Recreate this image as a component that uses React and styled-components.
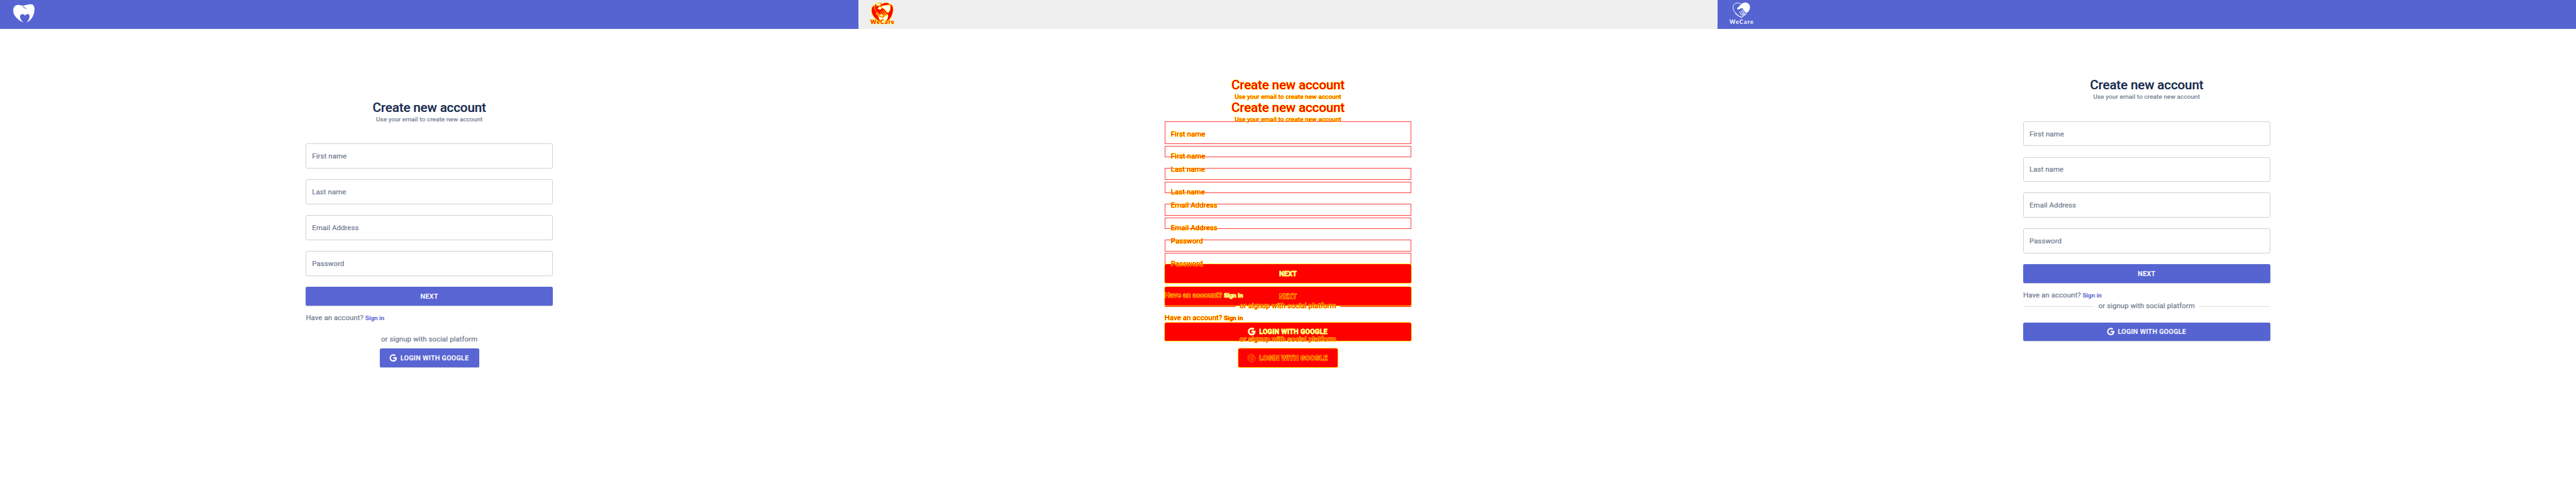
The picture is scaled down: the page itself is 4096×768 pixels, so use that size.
import React from "react";
import styled, { createGlobalStyle, css } from "styled-components";

const SCALE = 4096 / 5760;
const u = (n) => `${+(n * SCALE).toFixed(3)}px`;

const RED = "#ff0000";
const YELLOW = "#ffff00";

const GlobalStyle = createGlobalStyle`
  body { margin: 0; background: #fff; overflow: hidden; }
  * { box-sizing: border-box; }
`;

const Page = styled.main`
  display: grid;
  grid-template-columns: repeat(3, 1fr);
  width: 4096px;
  height: 768px;
  font-family: Roboto, "Liberation Sans", sans-serif;
  color: #6b778c;
`;

const Panel = styled.section`
  display: flex;
  flex-direction: column;
  background: #fff;
  overflow: hidden;
`;

const TopBar = styled.header`
  flex: none;
  height: ${u(64)};
  padding-left: ${u(24)};
  background: ${(p) => (p.$muted ? "#efefef" : "#5664d2")};
`;

const LogoSvg = styled.svg`
  display: block;
  width: ${u(60)};
  height: ${u(64)};
`;

const marked = css`
  position: relative;
  z-index: 1;
  color: ${(p) => (p.$hollow ? "#fff6dc" : RED)};
  -webkit-text-stroke: ${u(1.6)} ${YELLOW};
  paint-order: stroke fill;
`;

const Stack = styled.div`
  flex: 1;
  display: grid;
  justify-content: center;
  align-content: start;
  grid-template-columns: ${u(552)};
`;

const Form = styled.form`
  grid-area: 1 / 1;
  display: flex;
  flex-direction: column;
  padding-top: ${(p) => u(p.$top)};
  -webkit-text-stroke: 0.2px currentColor;
`;

const Title = styled.h2`
  margin: 0;
  text-align: center;
  font-size: ${u(29)};
  line-height: ${u(34)};
  font-weight: 500;
  letter-spacing: ${u(-0.2)};
  color: #172b4d;
  ${(p) => p.$diff && marked}
`;

const Subtitle = styled.p`
  margin: 0 0 ${u(44)};
  text-align: center;
  font-size: ${u(14)};
  line-height: ${u(20)};
  letter-spacing: ${u(0.16)};
  ${(p) => p.$diff && marked}
`;

const Fields = styled.div`
  display: flex;
  flex-direction: column;
  gap: ${u(24)};
  margin-bottom: ${u(24)};
`;

const Field = styled.label`
  display: flex;
  align-items: center;
  height: ${u(56)};
  padding-left: calc(${u(14)} - 1px);
  border: 1px solid ${(p) => (p.$diff ? "transparent" : "#d0d0d0")};
  border-radius: ${u(4)};
  font-size: ${u(16)};
`;

const Words = styled.span`
  letter-spacing: ${u(0.15)};
  ${(p) => p.$diff && marked}
`;

const Button = styled.button`
  display: flex;
  align-items: center;
  justify-content: center;
  align-self: ${(p) => (p.$compact ? "center" : "stretch")};
  width: ${(p) => (p.$compact ? u(222) : "auto")};
  height: ${u(42)};
  padding: ${u(1)} 0 0;
  border: 0;
  border-radius: ${u(4)};
  background: ${(p) => (p.$diff ? RED : p.$tone)};
  box-shadow: ${(p) =>
    p.$diff ? `0 0 0 ${u(1)} ${YELLOW}, 0 ${u(0.5)} 0 ${u(1)} ${YELLOW}` : `0 ${u(1)} ${u(2)} rgba(60, 70, 110, 0.28)`};
  color: #fff;
  font-family: inherit;
  font-size: ${u(15)};
  font-weight: 500;
`;

const ButtonText = styled.span`
  letter-spacing: ${u(0.46)};
  ${(p) => p.$diff && marked}
`;

const GoogleSvg = styled.svg`
  width: ${u(20)};
  height: ${u(20)};
  margin: 0 ${u(8)} ${u(1)} ${u(-4)};
  overflow: visible;
`;

const Prompt = styled.p`
  display: flex;
  align-items: baseline;
  margin: ${u(16)} 0 ${(p) => u(p.$after)};
  font-size: ${u(16)};
  line-height: ${u(24)};
  gap: ${u(4)};
`;

const SignIn = styled.a`
  font-size: ${u(14)};
  font-weight: 500;
  color: #5664d2;
  ${(p) => p.$diff && marked}
`;

const Divider = styled.div`
  display: flex;
  align-items: center;
  justify-content: center;
  gap: ${u(9)};
  margin-bottom: ${(p) => u(p.$after)};
  font-size: ${u(16)};
  line-height: ${u(24)};
`;

const Rule = styled.i`
  flex: 1;
  height: 1px;
  background: ${(p) => (p.$diff ? RED : "#dcdcdc")};
`;

const Outlines = styled.div`
  grid-area: 1 / 1;
  padding-top: ${u(207)};
`;

const Segment = styled.div`
  height: ${(p) => u(p.$h)};
  border: 0 solid ${(p) => (p.$kind === "faint" ? "#fafafa" : "#ff3c3c")};
  border-width: ${(p) => (p.$kind === "gap" ? 0 : p.$kind === "faint" ? "0 1px" : "1px")};
`;

const TOOTH =
  "M89 72C89 46 102 34 121 33C134 33 144 38 151 39C155 50 164 59 184 59C172 55 160 49 152 38C170 36 188 30 208 29C224 29 232 44 232 62C231 98 214 134 180 151C193 134 201 118 198 104C195 91 177 91 169 105C161 91 139 91 135 107C133 122 143 139 158 153C124 136 89 108 89 72Z";
const HEART = "M160 117C140 105 104 80 104 51C104 25 132 8 160 29C188 8 216 25 216 48C216 66 208 77 194 87";
const HAND =
  "M160 30C172 19 192 14 205 23C219 33 220 58 209 72C204 80 197 84 191 86L169 55L153 57C145 65 133 67 131 57C138 51 148 38 160 30Z";
const FINGERS = "M148 81L160 99M157 74L172 97M166 67L183 92M173 61L192 85";
const KNUCKLES = "M119 87L125 94L132 99L140 108L150 110L160 117L171 109L166 99M171 109L181 101L174 91M181 101L192 94";

function ToothLogo() {
  return (
    <LogoSvg viewBox="72 0 180 192">
      <path d={TOOTH} fill="#fff" />
    </LogoSvg>
  );
}

function Wordmark({ diff }) {
  return (
    <text
      x="80"
      y="161"
      textLength="160"
      fontFamily="Lato, 'Open Sans', sans-serif"
      fontWeight="700"
      fontSize="38"
      fill={diff ? RED : "#fff"}
      stroke={diff ? YELLOW : "none"}
      strokeWidth="5"
      paintOrder="stroke"
    >
      WeCare
    </text>
  );
}

function HandsLogo() {
  return (
    <LogoSvg viewBox="72 0 180 192">
      <path d={HEART} fill="none" stroke="#fff" strokeWidth="4" />
      <path d={HAND} fill="#fff" />
      <path d={FINGERS + KNUCKLES} fill="none" stroke="#fff" strokeWidth="4.5" strokeLinecap="round" />
      <Wordmark />
    </LogoSvg>
  );
}

function DiffLogo() {
  return (
    <LogoSvg viewBox="72 0 180 192">
      <path d={TOOTH} fill={RED} stroke={YELLOW} strokeWidth="7" paintOrder="stroke" />
      <path d="M108 38C118 18 145 14 160 28C175 16 200 16 212 32L156 42L118 40Z" fill={RED} stroke={YELLOW} strokeWidth="5" paintOrder="stroke" />
      <path d="M118 28C128 20 144 21 153 30L146 37L122 36Z" fill="#fff" stroke={YELLOW} strokeWidth="3" />
      <path d="M157 41C175 38 195 32 212 35C217 52 214 74 198 86C189 79 185 66 174 60L157 51Z" fill="#fff" stroke={YELLOW} strokeWidth="4" />
      <path d="M129 57L140 45L153 47L156 57L145 65Z" fill="#fff" stroke={YELLOW} strokeWidth="3" />
      <path d="M108 42C108 68 120 80 140 92" fill="none" stroke={YELLOW} strokeWidth="4" />
      <path d="M135 108C142 102 150 114 160 116L184 98L197 99C201 116 191 134 174 142H153C142 132 134 119 135 108Z" fill="#fff" stroke={YELLOW} strokeWidth="3" />
      <path d={KNUCKLES} fill="none" stroke={YELLOW} strokeWidth="10" />
      <path d={KNUCKLES} fill="none" stroke={RED} strokeWidth="4" />
      <path d={FINGERS} fill="none" stroke={YELLOW} strokeWidth="4" />
      <Wordmark diff />
    </LogoSvg>
  );
}

function GoogleIcon({ diff, hollow }) {
  return (
    <GoogleSvg viewBox="0 0 20 20">
      <path
        d="M11.5 8.5v3.1h4.8c-.5 2.2-2.2 3.6-4.8 3.6a5.2 5.2 0 1 1 3.4-9.1l2.3-2.3a8.3 8.3 0 1 0-5.7 14.6c4.8 0 8.2-3.3 8.2-8.3 0-.5-.1-1.1-.2-1.6z"
        fill={diff && !hollow ? RED : "#fff"}
        stroke={diff ? YELLOW : "none"}
        strokeWidth="1.4"
        paintOrder="stroke"
      />
    </GoogleSvg>
  );
}

const LABELS = ["First name", "Last name", "Email Address", "Password"];

function SignUp({ diff, hollow, compact, top }) {
  const mark = { $diff: diff };
  const core = { $diff: diff, $hollow: hollow };
  const tone = compact ? "#5965d3" : "#5664d2";
  return (
    <Form $top={top}>
      <Title {...mark}>Create new account</Title>
      <Subtitle {...mark}>Use your email to create new account</Subtitle>
      <Fields>
        {LABELS.map((label) => (
          <Field key={label} {...mark}>
            <Words {...mark}>{label}</Words>
          </Field>
        ))}
      </Fields>
      <Button type="button" $tone={tone} {...mark}>
        <ButtonText {...core}>NEXT</ButtonText>
      </Button>
      <Prompt $after={compact ? 24 : 0}>
        <Words {...mark}>Have an account?</Words>
        <SignIn {...core}>Sign in</SignIn>
      </Prompt>
      <Divider $after={compact ? 8 : 24}>
        {!compact && <Rule {...mark} />}
        <Words {...mark}>or signup with social platform</Words>
        {!compact && <Rule {...mark} />}
      </Divider>
      <Button type="button" $tone={tone} $compact={compact} {...mark}>
        <GoogleIcon diff={diff} hollow={hollow} />
        <ButtonText {...core}>LOGIN WITH GOOGLE</ButtonText>
      </Button>
    </Form>
  );
}

const SEGMENTS = [
  ["box", 51], ["gap", 4], ["box", 26], ["faint", 24],
  ["box", 26], ["gap", 4], ["box", 26], ["faint", 24],
  ["box", 26], ["gap", 4], ["box", 26], ["faint", 24],
  ["box", 26], ["gap", 4], ["box", 26],
];

export default function App() {
  return (
    <>
      <GlobalStyle />
      <Page>
        <Panel>
          <TopBar><ToothLogo /></TopBar>
          <Stack><SignUp compact top={159} /></Stack>
        </Panel>
        <Panel>
          <TopBar $muted><DiffLogo /></TopBar>
          <Stack>
            <Outlines>
              {SEGMENTS.map(([kind, h], i) => <Segment key={i} $kind={kind} $h={h} />)}
            </Outlines>
            <SignUp diff compact top={159} />
            <SignUp diff hollow top={109} />
          </Stack>
        </Panel>
        <Panel>
          <TopBar><HandsLogo /></TopBar>
          <Stack><SignUp top={109} /></Stack>
        </Panel>
      </Page>
    </>
  );
}
